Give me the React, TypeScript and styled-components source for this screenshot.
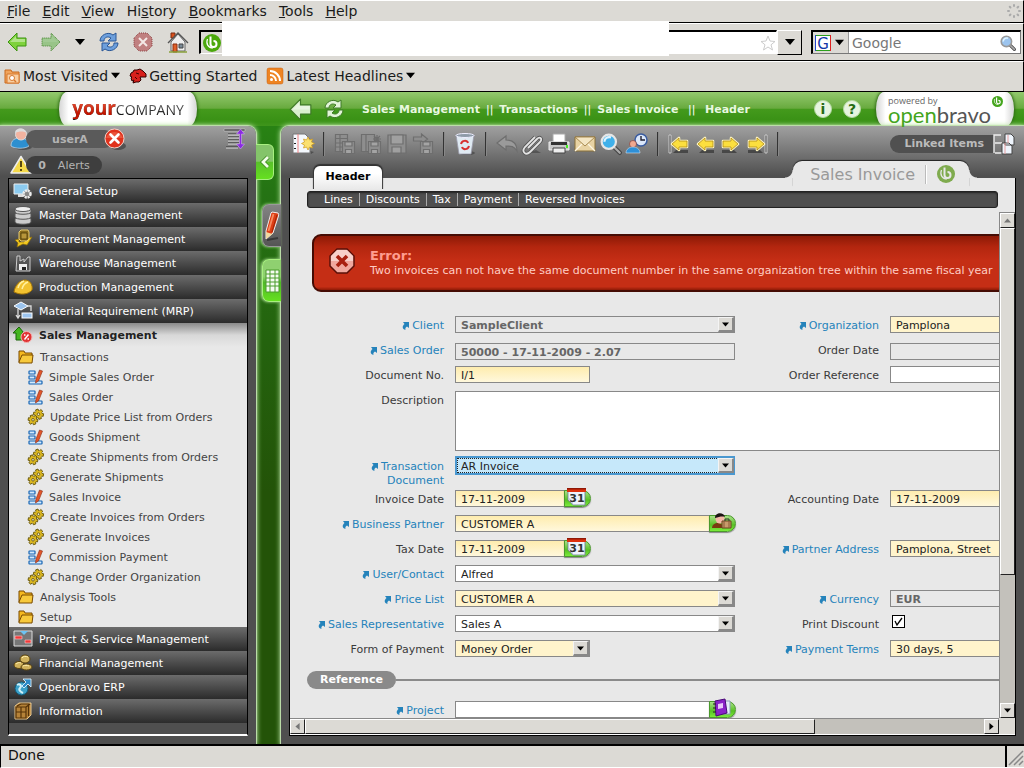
import React from 'react';
import styled, { createGlobalStyle, css } from 'styled-components';

const Global = createGlobalStyle`
  * { box-sizing: border-box; }
  html, body, #root { height: 100%; margin: 0; }
  body { font-family: "DejaVu Sans", Verdana, sans-serif; font-size: 11px; color: #3a3a3a; overflow: hidden; }
  button { border: 0; padding: 0; background: none; font: inherit; color: inherit; }
  a { color: inherit; text-decoration: none; }
  svg { display: block; flex: none; overflow: visible; }
`;

const chrome = '#dcdad5';
const panel = '#e8e8e8';

/* ---------- browser window ---------- */
const Window = styled.div`
  display: flex; flex-direction: column; height: 100vh; background: ${chrome};
`;
const ChromeBar = styled.div<{ $h: number }>`
  display: flex; align-items: center; flex: none; position: relative;
  height: ${p => p.$h}px; background: ${chrome};
  border-top: 1px solid #fff; border-bottom: 1px solid #000; border-right: 1px solid #000;
  font-size: 14px; color: #1a1a1a;
`;
const MenuBar = styled(ChromeBar)`padding: 0 2px 2px 7px; gap: 12px;`;
const Spacer = styled.span`flex: 1;`;
const NavBar = styled(ChromeBar)`padding: 0 2px 0 7px;`;
const NavButtons = styled.div`display: flex; align-items: center; gap: 14px; width: 192px; flex: none;`;
const NavButton = styled.button`display: flex;`;
const UrlBox = styled.div`
  position: relative; display: flex; align-items: center; flex: 1; height: 24px; background: #fff;
  border: 2px solid #000; border-right: 1px solid #fff; border-bottom: 1px solid #fff;
`;
const SiteBadge = styled.span`
  display: flex; align-items: center; height: 100%; width: 23px; padding-left: 2px; background: ${chrome};
`;
const UrlInput = styled.input`
  position: absolute; left: 21px; right: 107px; top: -11px; height: 35px; border: 0; background: #fff; padding: 0 8px;
`;
const DropButton = styled.button`
  display: flex; align-items: center; justify-content: center; width: 25px; height: 25px; margin-right: 9px;
  background: ${chrome}; border: 1px solid #fff; border-right: 1px solid #000; border-bottom: 1px solid #000;
`;
const SearchBox = styled.div`
  display: flex; align-items: center; width: 210px; height: 24px; background: #fff; flex: none;
  border: 1px solid #777; border-top: 2px solid #000; border-left: 2px solid #000; padding-right: 4px;
`;
const Engine = styled.button`
  display: flex; align-items: center; gap: 4px; width: 36px; height: 100%; padding-left: 2px;
  background: ${chrome}; border-right: 1px solid #999; flex: none;
`;
const SearchInput = styled.input`
  flex: 1; min-width: 0; border: 0; padding: 0 3px; font: 14px "DejaVu Sans", sans-serif; background: none;
  &::placeholder { color: #777; opacity: 1; }
`;
const BookmarkBar = styled(ChromeBar)`padding: 0 4px 2px; gap: 10px;`;
const Bookmark = styled.a`display: flex; align-items: center; gap: 3px;`;
const StatusBar = styled.footer`
  display: flex; align-items: center; height: 24px; flex: none; padding: 0 0 0 7px; font-size: 14px; color: #111;
  background: ${chrome}; border-top: 2px solid #000; border-left: 1px solid #000; border-bottom: 1px solid #fff;
`;
const StatusText = styled.span`padding-bottom: 3px;`;
const Grip = styled.span`
  display: flex; align-items: flex-end; width: 19px; height: 100%; border-left: 2px solid #000; padding: 2px;
`;

/* ---------- application frame ---------- */
const AppArea = styled.div`
  display: flex; flex-direction: column; flex: 1; min-height: 0; overflow: hidden;
  background: linear-gradient(#2a8a14, #257314 100px, #235308 400px);
`;
const Header = styled.header`
  display: flex; align-items: center; height: 34px; flex: none; padding-right: 10px;
  background: linear-gradient(#93c96e, #68aa3e 48%, #449a1c 50%, #389015 88%, #3f951c);
`;
const LogoPlate = styled.div<{ $at: number }>`
  display: flex; align-items: center; justify-content: center; width: 138px; height: 34px; flex: none;
  margin-left: ${p => p.$at}px; border-radius: 8px / 17px;
  background: linear-gradient(90deg, #d5d5d5, #fff 7%, #fff 93%, #d5d5d5);
  box-shadow: 0 0 3px 1px #2f6a17;
`;
const CompanyName = styled.div`
  font-family: "Open Sans", sans-serif; font-size: 14px; line-height: 22px; display: flex; align-items: baseline;
  color: transparent; background: linear-gradient(#999, #111 75%); background-clip: text;
  b { font-size: 19px; background: linear-gradient(#ef6a4d, #c31500 75%); background-clip: text; }
`;
const HeaderTools = styled.div`display: flex; align-items: center; gap: 12px; margin-left: 92px; flex: none;`;
const IconButton = styled.button`display: flex; flex: none;`;
const Crumbs = styled.nav`
  display: flex; align-items: center; gap: 6px; margin-left: 18px; flex: 1; color: #fff; white-space: nowrap;
  a { font-weight: bold; color: #e9f8e0; }
`;
const Powered = styled.div`
  position: relative; font-family: "Open Sans", sans-serif; font-size: 9px; line-height: 11px; color: #666;
  width: 118px; padding-left: 2px;
`;
const Brand = styled.div`
  font-family: Lato, sans-serif; font-size: 22px; line-height: 18px; color: #555;
  span { color: #44a51c; }
`;
const BrandMark = styled.span`position: absolute; right: 1px; top: 1px;`;
const Body = styled.div`display: flex; flex: 1; min-height: 0;`;
const glow = css`
  background: linear-gradient(#a0a0a0, #4f4f4f 50px);
  box-shadow: 0 0 5px 1px #bfe8a8, 0 0 1px 1px #c4d8b8;
`;
const Sidebar = styled.aside`
  display: flex; flex-direction: column; width: 256px; flex: none; border-radius: 0 8px 0 0; ${glow}
`;
const Rail = styled.div`display: flex; flex-direction: column; width: 25px; flex: none; padding-top: 18px; z-index: 1;`;
const Collapse = styled.button`
  display: flex; align-items: center; justify-content: center; width: 18px; height: 36px; margin-bottom: 24px;
  border: 1px solid #a8f080; border-left: 0; border-radius: 0 6px 6px 0; background: linear-gradient(#84c46a 48%, #58c02a 50%, #66e020);
`;
const RailTab = styled.button<{ $gray?: boolean }>`
  display: flex; align-items: center; justify-content: center; align-self: flex-end; width: 19px; height: 43px;
  margin-bottom: 12px; border-radius: 7px 0 0 7px;
  border: 1px solid ${p => (p.$gray ? '#999' : '#a8f080')}; border-right: 0;
  background: ${p => (p.$gray ? 'linear-gradient(#848484, #555)' : 'linear-gradient(#8fd070 40%, #50b828 55%, #66e020)')};
  box-shadow: -1px 0 3px #b5e59c;
`;

/* ---------- side menu ---------- */
const UserRow = styled.div`display: flex; align-items: center; height: 26px; padding: 0 10px; flex: none;`;
const Pill = styled.span<{ $w: number; $bg: string }>`
  display: flex; align-items: center; justify-content: center; gap: 12px; width: ${p => p.$w}px; height: 18px;
  margin: 0 -10px 0 -6px; border-radius: 9px; background: ${p => p.$bg}; color: #b3b3b3;
`;
const Menu = styled.nav`
  flex: 1; margin: 0 8px 8px; border: 1px solid #000; border-bottom: 2px solid #fff; overflow: hidden;
`;
const Module = styled.a<{ $open?: boolean }>`
  display: flex; align-items: center; gap: 6px; height: 24px; padding-left: 4px; white-space: nowrap;
  ${p => p.$open
    ? css`background: linear-gradient(#8a8a8a, #d8d8d8 50%, ${panel}); color: #222; font-weight: bold;`
    : css`background: linear-gradient(#6c6c6c, #2b2b2b); color: #fff;`}
`;
const Leaf = styled.a<{ $deep?: boolean }>`
  display: flex; align-items: center; gap: 6px; height: 20px; padding-left: ${p => (p.$deep ? 19 : 9)}px;
  background: ${panel}; color: #444; white-space: nowrap;
`;

/* ---------- main panel ---------- */
const Main = styled.main`
  display: flex; flex-direction: column; flex: 1; min-width: 0; border-radius: 8px 0 0 0; ${glow}
`;
const ToolBar = styled.div`display: flex; align-items: center; height: 35px; flex: none; padding: 0 9px 0 11px;`;
const Tools = styled.div<{ $gap: number }>`display: flex; align-items: center; gap: ${p => p.$gap}px;`;
const Rule = styled.span`
  width: 2px; height: 24px; margin: 0 9px; background: #333; border-right: 1px solid #888; flex: none;
`;
const Linked = styled.button`display: flex; align-items: center; color: #bbb; font-weight: bold;`;
const LinkedPill = styled.span`
  display: flex; align-items: center; height: 18px; padding: 0 10px 0 14px; border-radius: 9px 0 0 9px; background: #505050;
`;
const TabsRow = styled.div`
  display: flex; align-items: flex-start; justify-content: space-between; height: 17px; flex: none; padding: 0 55px 0 33px;
`;
const ActiveTab = styled.button`
  position: relative; z-index: 1; width: 68px; height: 24px; margin-top: 5px; padding-bottom: 4px; color: #000; font-weight: bold;
  background: linear-gradient(#fff 30%, ${panel}); border-radius: 6px 6px 0 0; box-shadow: 0 -1px 1px 1px #333;
  clip-path: inset(-3px -3px 1px -3px);
`;
const TitleTab = styled.h1`
  position: relative; display: flex; align-items: center; gap: 10px; margin: 0; height: 26px; padding: 0 14px 0 17px;
  font-size: 16px; font-weight: normal; color: #999; background: ${panel}; border-radius: 9px 9px 0 0;
  box-shadow: 0 -1px 1px #222;
  &::before, &::after { content: ""; position: absolute; top: 9px; width: 8px; height: 8px; }
  &::before { left: -8px; background: radial-gradient(circle at 0 0, transparent 7px, ${panel} 8px); }
  &::after { right: -8px; background: radial-gradient(circle at 100% 0, transparent 7px, ${panel} 8px); }
  i { width: 2px; height: 19px; background: #bbb; border-right: 1px solid #fff; }
`;
const Panel = styled.section`
  display: flex; flex-direction: column; flex: 1; min-height: 0; margin: 0 8px 8px;
  background: ${panel}; border: solid #000; border-width: 0 1px 1px;
`;
const SubTabs = styled.nav`
  display: flex; align-items: center; height: 17px; flex: none; margin: 13px 17px 4px; padding-left: 10px;
  border: 1px solid #222; border-radius: 3px; background: #4f4f4f; box-shadow: inset 0 1px 2px #222; color: #fff; z-index: 1;
  a { padding: 0 6px; line-height: 13px; }
  a + a { border-left: 1px solid #aaa; }
`;
const ScrollFrame = styled.div`
  display: grid; grid-template: minmax(0, 1fr) 16px / minmax(0, 1fr) 16px; flex: 1; min-height: 0;
  border-bottom: 1px solid #fff;
`;
const View = styled.div`overflow: hidden;`;
const Document = styled.div`min-width: 944px; padding: 22px 0 0 22px;`;
const Track = styled.div<{ $v?: boolean }>`
  display: flex; flex-direction: ${p => (p.$v ? 'column' : 'row')}; background: #c3c1bb; min-width: 0; min-height: 0;
  border: solid #888; border-width: ${p => (p.$v ? '1px 0 0 1px' : '1px 0 0 0')};
`;
const raised = css`
  background: ${chrome}; border: 1px solid #fff; border-right-color: #222; border-bottom-color: #222;
`;
const TrackButton = styled.button`
  display: flex; align-items: center; justify-content: center; width: 15px; height: 15px; flex: none; ${raised}
`;
const Thumb = styled.div<{ $share: number }>`flex: ${p => p.$share} 0 0; ${raised}`;
const Rest = styled.div<{ $share: number }>`flex: ${p => p.$share} 0 0;`;
const Corner = styled.div`background: ${chrome};`;

/* ---------- message and form ---------- */
const ErrorBox = styled.div`
  display: flex; gap: 15px; height: 58px; padding: 12px 0 0 15px; border: 2px solid #450c04; border-radius: 9px;
  background: linear-gradient(#8d1a06, #b3260f 20%, #c52e15 45%, #c52e15 94%, #8d1a06);
  color: #ffcdc4; white-space: nowrap; overflow: hidden;
  h2 { margin: 0; font-size: 13px; line-height: 15px; color: #ff9d90; }
  p { margin: 0; line-height: 16px; }
`;
const Form = styled.form`
  display: grid; grid-template-columns: 132px 280px 133px 280px; column-gap: 11px; padding-top: 20px;
  grid-auto-rows: 25px; align-items: center;
  grid-template-rows: 25px 25px 25px 66px 33px;
`;
const LabelCell = styled.label<{ $col?: number; $link?: boolean; $top?: number }>`
  grid-column: ${p => p.$col ?? 1}; display: flex; justify-content: flex-end; gap: 3px; text-align: right;
  line-height: 14px; color: ${p => (p.$link ? '#2583bb' : '#3a3a3a')}; white-space: nowrap; padding-top: ${p => p.$top ?? 2}px;
  ${p => p.$top !== undefined && css`align-self: start;`}
  svg { margin-top: 3px; }
`;
type Tone = 'yellow' | 'gray' | 'white';
const fills: Record<Tone, string> = { yellow: '#fff4cc', gray: panel, white: '#fff' };
const control = css`
  height: 17px; border: 1px solid #888; border-radius: 0; padding: 1px 0 0 5px; margin: 0; outline: 0;
  font: 11px "DejaVu Sans", Verdana, sans-serif; color: #222;
`;
const FieldCell = styled.div<{ $col?: number; $w?: number; $low?: boolean; $top?: boolean }>`
  position: relative; grid-column: ${p => p.$col ?? 2}; display: flex; align-items: center;
  ${p => p.$w && css`width: ${p.$w}px;`}
  ${p => p.$low && css`margin-top: 4px;`}
  ${p => p.$top && css`align-self: start; padding-top: 3px;`}
`;
const TextInput = styled.input<{ $tone: Tone }>`
  ${control} flex: 1; min-width: 0;
  background: ${p => (p.$tone === 'yellow' ? 'linear-gradient(#feecae, #fff8dc)' : fills[p.$tone])};
  ${p => p.$tone === 'gray' && css`font-weight: bold; color: #666;`}
`;
const SelectInput = styled.select<{ $tone: Tone; $focus?: boolean }>`
  ${control} appearance: none; width: 100%; background: ${p => fills[p.$tone]};
  ${p => p.$tone === 'gray' && css`font-weight: bold; color: #666;`}
  ${p => p.$focus && css`height: 19px; padding-left: 4px; border: 2px solid #4a98d0; background: #c6e8fa; outline: 1px dotted #222; outline-offset: -3px;`}
`;
const SelectKnob = styled.span`
  position: absolute; right: 1px; width: 16px; height: 15px; display: flex; align-items: center; justify-content: center;
  background: ${chrome}; border: 1px solid #f4f4f4; border-right: 2px solid #888; border-bottom: 2px solid #888; pointer-events: none;
`;
const TextArea = styled.textarea`
  grid-column: 2 / 5; align-self: start; margin: 4px 0 0; height: 60px; border: 1px solid #888; resize: none; background: #fff;
`;
const Picker = styled.button`
  position: relative; display: flex; align-items: center; justify-content: center; width: 27px; height: 17px; margin: 0 -1px;
  border: 1px solid #4b9a2c; border-radius: 0 9px 9px 0; background: linear-gradient(#a8e088, #58c024 60%, #7cec3c);
  box-shadow: 0 1px 1px #888;
  svg { margin: -4px 3px 0 0; }
`;
const Check = styled.input`appearance: none; width: 13px; height: 13px; margin: 0 0 4px 2px; border: 1px solid #000; background: #fff;`;
const CheckMark = styled.span`position: absolute; left: 4px; top: 2px; pointer-events: none;`;
const Group = styled.div`
  grid-column: 1 / 5; display: flex; align-items: center; height: 38px; margin-left: -5px; align-self: start;
  span { height: 18px; padding: 0 13px; border-radius: 9px; background: #8a8a8a; color: #fff; font-weight: bold; line-height: 18px; }
  hr { flex: 1; height: 2px; margin: 0; border: 0; background: #8a8a8a; }
`;
const ProjectRow = styled(Form)`padding-top: 11px; grid-template-rows: 25px;`;

/* ---------- drawings ---------- */
const Tri = ({ d = 'down', s = 10, c = '#000' }: { d?: string; s?: number; c?: string }) => {
  const paths: Record<string, string> = { down: 'M0 2h10L5 8z', up: 'M0 8h10L5 2z', left: 'M8 0v10L2 5z', right: 'M2 0v10L8 5z' };
  return <svg width={s} height={s} viewBox="0 0 10 10"><path d={paths[d]} fill={c} /></svg>;
};
const Arrow = ({ w = 20, fill, stroke, flip, dashed }: { w?: number; fill: string; stroke: string; flip?: boolean; dashed?: boolean }) => (
  <svg width={w} height={w} viewBox="0 0 20 20"><g transform={flip ? 'matrix(-1 0 0 1 20 0)' : undefined}>
    <path d="M1 10l9-9v5h9v8h-9v5z" fill={fill} stroke={stroke} strokeLinejoin="round" strokeDasharray={dashed ? '1 1' : undefined} />
    <path d="M3 10l6-6v3h9v3z" fill="#fff" opacity={dashed ? 0.1 : 0.4} /></g></svg>
);
const Refresh = ({ c, e }: { c: string; e: string }) => (
  <svg width="20" height="20" viewBox="0 0 20 20" fill={c} stroke={e} strokeWidth="1">
    <path d="M1 9C1 3 9-1 14 3l3-2v8H9l3-3C9 4 5 5 5 9z" /><path d="M19 11c0 6-8 10-13 6l-3 2v-8h8l-3 3c3 2 7 1 7-3z" />
  </svg>
);
const Mark = ({ s, c, inner = '#fff' }: { s: number; c: string; inner?: string }) => (
  <svg width={s} height={s} viewBox="0 0 18 18"><circle cx="9" cy="9" r="9" fill={c} />
    <path d="M7.500 2.500v7.500a3 3 0 1 0 3-3" fill="none" stroke={inner} strokeWidth="2" /><path d="M4.500 5c-2 5 1 9 5.500 9" fill="none" stroke={inner} strokeWidth="1.200" /></svg>
);
const Home = () => (
  <svg width="22" height="22" viewBox="0 0 22 22"><path d="M4 2h4v5H4z" fill="#d8501c" stroke="#7a2a10" /><path d="M4 11l7-8 7 8v9H4z" fill="#eee" stroke="#666" />
    <path d="M1 12L11 2l10 10" fill="none" stroke="#555" strokeWidth="1.400" /><path d="M6 13h4v8H6z" fill="#e0602a" stroke="#8a2c10" /><path d="M12 13h4v4h-4z" fill="#7a8b98" stroke="#444" /><path d="M2 21h18" stroke="#8aa03a" strokeWidth="1.500" /></svg>
);
const StopIcon = () => (
  <svg width="20" height="20" viewBox="0 0 20 20"><path d="M6 1h8l5 5v8l-5 5H6l-5-5V6z" fill="#c08080" stroke="#8c4040" strokeDasharray="1 1" /><path d="M6 6l8 8M14 6l-8 8" stroke="#f4e8e6" strokeWidth="2" /></svg>
);
const Star = () => (
  <svg width="16" height="16" viewBox="0 0 16 16"><path d="M8 1l2 5 5 .5-4 3.300L12.500 15 8 12l-4.500 3L5 9.800 1 6.500 6 6z" fill="#fff" stroke="#ccc" /></svg>
);
const Lens = ({ s = 16, soft }: { s?: number; soft?: boolean }) => (
  <svg width={s} height={s} viewBox="0 0 20 20"><path d="M12 12l6 6" stroke="#444" strokeWidth="4" strokeLinecap="round" /><path d="M12 12l6 6" stroke="#aaa" strokeWidth="2" strokeLinecap="round" />
    <circle cx="8" cy="8" r="6.500" fill={soft ? '#9cc4ee' : '#3fb0ea'} stroke={soft ? '#999' : '#e6e6e6'} strokeWidth="2" /><path d="M4 8c0-3 3-5 6-4" stroke="#dff4ff" strokeWidth="2" fill="none" /></svg>
);
const Throbber = () => (
  <svg width="14" height="14" viewBox="0 0 14 14" fill="#aaa">{[0, 45, 90, 135, 180, 225, 270, 315].map(a => <rect key={a} x="6" y="0" width="2" height="3" rx="1" transform={`rotate(${a} 7 7)`} />)}</svg>
);
const Rss = () => (
  <svg width="16" height="16" viewBox="0 0 16 16"><rect width="16" height="16" rx="2" fill="#ee8422" stroke="#c65f10" strokeWidth=".5" /><g fill="none" stroke="#fff" strokeWidth="2"><path d="M3 7a6 6 0 0 1 6 6M3 3a10 10 0 0 1 10 10" /></g><circle cx="4.500" cy="11.500" r="1.500" fill="#fff" /></svg>
);
const MostVisited = () => (
  <svg width="16" height="16" viewBox="0 0 16 16"><path d="M1 2h6l1 2h7v11H1z" fill="#f0a45c" stroke="#c8681c" /><path d="M3 6h12v9H3z" fill="#f8cfa2" stroke="#d8782c" /><circle cx="8" cy="10" r="2.500" fill="#fff" stroke="#d8782c" /><path d="M10 12l2 2" stroke="#d8782c" strokeWidth="1.500" /></svg>
);
const Dino = () => (
  <svg width="16" height="14" viewBox="0 0 16 14"><path d="M1 4l2-1 1-2 3 0 3-1 3 2 3 3v3l-4 0-2 0 1 3-2 2-3 0-3 1 1-3-2 1-1-3 1-1-2-1z" fill="#d8201c" stroke="#300" strokeWidth="1" /><path d="M6 4l3 1M5 8l2 2" stroke="#400" /></svg>
);
const UserIcon = ({ s = 22 }: { s?: number }) => (
  <svg width={s} height={s} viewBox="0 0 22 22"><ellipse cx="13" cy="19" rx="9" ry="3" fill="#333" opacity=".6" /><path d="M1 18c0-6 4-8 9-8s9 2 9 8c-4 3-14 3-18 0z" fill="#2d8fd0" stroke="#cde" strokeWidth=".7" /><circle cx="11" cy="6.500" r="5.500" fill="#f2b3a0" stroke="#ddd" /><path d="M5 5c0-6 10-6 12 0-3-2-8-2-12 0z" fill="#ddd" /></svg>
);
const CloseIcon = () => (
  <svg width="22" height="22" viewBox="0 0 22 22"><ellipse cx="14" cy="18" rx="8" ry="4" fill="#333" opacity=".6" /><circle cx="10.500" cy="10.500" r="9.500" fill="#e0321c" stroke="#f4d0c8" /><path d="M2 10a9 9 0 0 1 17 0z" fill="#f06a50" opacity=".6" /><path d="M6.500 6.500l8 8M14.500 6.500l-8 8" stroke="#fff" strokeWidth="2.600" strokeLinecap="round" /></svg>
);
const Warn = () => (
  <svg width="22" height="20" viewBox="0 0 22 20"><path d="M11 1.500L21 18H1z" fill="#f5d94a" stroke="#eee" strokeWidth="1.500" strokeLinejoin="round" /><path d="M11 6v6M11 14v2" stroke="#5a4a10" strokeWidth="2" /></svg>
);
const MenuToggle = () => (
  <svg width="22" height="22" viewBox="0 0 22 22"><path d="M0 1h21v2H0z" fill="#444" stroke="#ccc" strokeWidth=".6" /><g stroke="#333" strokeWidth="1"><path d="M4 6h11M4 9h11M4 12h11M4 15h11M2 19h12" /></g><g stroke="#ddd" strokeWidth="1"><path d="M4 7h11M4 10h11M4 13h11M4 16h11M2 20h12" /></g><path d="M16.500 1l4 5h-3v10h3l-4 5-4-5h3V6h-3z" fill="#8a2be2" stroke="#d9b8f4" strokeWidth=".5" /></svg>
);
const Folder = () => (
  <svg width="16" height="14" viewBox="0 0 16 14"><path d="M1 12V1h5l1 2h7v3" fill="#f5b81e" stroke="#7a4a00" /><path d="M1 12l3-7h11l-1 8H1z" fill="#f7c93c" stroke="#7a4a00" /></svg>
);
const WindowDoc = () => (
  <svg width="15" height="15" viewBox="0 0 15 15"><g fill="#d4eafc" stroke="#1464b4" strokeWidth="1.200"><rect x="1" y="1" width="6" height="3" rx=".5" /><rect x="1" y="6" width="6" height="3" rx=".5" /><rect x="1" y="11" width="13" height="3" rx=".5" /></g><path d="M11.500 0l3 1-4 10-3 2 .5-4z" fill="#e0562a" stroke="#8e2c10" strokeWidth=".6" /></svg>
);
const Gear = ({ x, y, r }: { x: number; y: number; r: number }) => (
  <g transform={`translate(${x} ${y})`}>
    {[0, 60, 120].map(a => <path key={a} d={`M-${r} -1.300h${2 * r}v2.600h-${2 * r}z`} transform={`rotate(${a + 10})`} fill="#dcb822" stroke="#6a5a10" strokeWidth=".9" />)}
    <circle r={r - 1.600} fill="#dcb822" /><circle r="1.300" fill="#efe9d0" stroke="#6a5a10" strokeWidth=".9" />
  </g>
);
const Gears = () => <svg width="16" height="16" viewBox="0 0 16 16"><Gear x={10.500} y={5.200} r={5} /><Gear x={5} y={10.800} r={4.800} /></svg>;
const moduleArt: Record<string, React.ReactNode> = {
  setup: <><path d="M1 3h14v10H1z" fill="#8ccbf0" stroke="#eee" /><path d="M5 13h5v3H5z" fill="#ddd" /><circle cx="14" cy="13" r="3.500" fill="#888" stroke="#eee" strokeWidth="2.500" strokeDasharray="2 .8" /></>,
  data: <g fill="#ccc" stroke="#555">{[14, 9, 4].map(y => <path key={y} d={`M2 ${y}c0-3 16-3 16 0v3c0 3-16 3-16 0z`} />)}<ellipse cx="10" cy="4" rx="8" ry="2.500" fill="#eee" /></g>,
  procure: <><path d="M2 11l4-1v3h5l4-4 4-1-5 8-4-1-6 3 1-4z" fill="#f2c81e" stroke="#8a6a08" strokeWidth=".7" /><path d="M6 3l2-2h7l1 2v7l-2 2H8l-2-2z" fill="#8a6c1c" stroke="#e8cc70" /><path d="M8 4h6v6H8z" fill="#b8963a" stroke="#4a3808" strokeWidth=".8" /></>,
  warehouse: <><path d="M4 3h3v5l4-2v3l4-5h2v14H3z" fill="#555" stroke="#ccc" /><path d="M6 11h8v6H6z" fill="#eee" /><path d="M9 14h4v3H9z" fill="#222" /></>,
  production: <><path d="M1 15C2 8 7 3 12 3c5 0 8 5 7 10-4 5-12 5-18 2z" fill="#f2c230" stroke="#a87808" /><path d="M5 11c1-4 3-6 6-7M9 12c1-4 3-6 6-7" stroke="#fff0a0" strokeWidth="1.500" fill="none" /></>,
  mrp: <><path d="M8 1l7 4-7 4-7-4z" fill="#9cc4ee" stroke="#fff" /><path d="M5 8v9M3 14l2 3 2-3M15 5h3v5" fill="none" stroke="#ddd" strokeWidth="1.300" /><rect x="9" y="12" width="10" height="5" fill="#9cc4ee" stroke="#fff" /></>,
  sales: <><path d="M6 2l5 6H9v7H3V8H0z" fill="#43b51e" stroke="#1a6408" /><circle cx="13.500" cy="12" r="5.500" fill="#e03434" stroke="#f4b4b4" /><path d="M11.500 14.500l4-5M11 10h1.500M14.500 14H16" stroke="#fff" strokeWidth="1.500" /></>,
  project: <><path d="M1 2h18v15H1z" fill="#777" stroke="#ddd" /><path d="M2 7h7v3H2zM12 11h6v3h-6z" fill="#f03a3a" stroke="#fcc" strokeWidth=".6" /><path d="M7 2h8l-4 4z" fill="#6cc4f4" /></>,
  finance: <g fill="#d0b25c" stroke="#5a4410"><ellipse cx="12" cy="6" rx="5" ry="4" /><ellipse cx="6" cy="12" rx="5" ry="3.500" /><ellipse cx="13.500" cy="14" rx="5.500" ry="3" /><path d="M9 5c1-2 4-2 6-1M3 11c1-1 3-2 5-1M10 13c2-1 4-1 6 0" stroke="#fff0b0" fill="none" /></g>,
  erp: <><circle cx="8.500" cy="11.500" r="6.500" fill="#3aa0c8" stroke="#145a78" /><path d="M4 8c3-2 5 1 3 3s1 4 3 5" fill="none" stroke="#d0f0f8" strokeWidth="2" /><path d="M10 2h8v8l-3-3-4 4-2-2 4-4z" fill="#2d8ac8" stroke="#dff2fc" strokeWidth=".9" /></>,
  info: <><path d="M2 5l4-3h12v12l-4 4H2z" fill="#b58238" stroke="#e8c890" /><path d="M3 6h10v11H3zM8 6v11M3 11h10M13 6l4-3M15.500 4v11M4 5l4-2h8" fill="none" stroke="#553208" strokeWidth="1.200" /></>,
};
const Art = ({ id }: { id: string }) => <svg width="20" height="20" viewBox="0 0 20 20">{moduleArt[id]}</svg>;

const faded = { fill: '#8e8e8e', stroke: '#6e6e6e', strokeWidth: 1.2 };
const Disk = () => <><path d="M8.500 8.500h12v12h-12z" /><path d="M11 9h7v4h-7z" fill="#a4a4a4" /><path d="M11.500 16.500h6v4h-6z" fill="#a4a4a4" /></>;
const toolArt: Record<string, React.ReactNode> = {
  fresh: <><path d="M19 21l3-2-4-1z" fill="#333" opacity=".6" /><path d="M1 1h12l5 5v14H1z" fill="#f4f8fd" stroke="#777" /><path d="M6 1v19" stroke="#f08080" /><path d="M3 5v1M3 10v1M3 15v1" stroke="#222" strokeWidth="2" /><path d="M16 4l1.500 3 3-1-1 3 3 1.500-3 1.500 1 3-3-1L16 17l-1.500-3-3 1 1-3-3-1.500 3-1.500-1-3 3 1z" fill="#fbe070" stroke="#d09a1a" strokeWidth=".7" /></>,
  saveGrid: <g {...faded}><path d="M1.500 1.500h12v17h-12zM1.500 5.500h12M1.500 10h12M1.500 14h12M6 1.500v17" /><Disk /></g>,
  saveNew: <g {...faded}><path d="M1.500 1.500h13v17h-13zM6 1.500v17" /><path d="M17 2v8M13 6h8M14 3l6 6M20 3l-6 6" /><Disk /></g>,
  save: <g {...faded}><path d="M2 2h18v18H2z" /><path d="M5 2h12v9H5z" fill="#a0a0a0" /><path d="M6 14h9v6H6z" fill="#a0a0a0" /></g>,
  saveNext: <g {...faded}><path d="M1.500 4h8V1l6 5-6 5V8h-8z" /><Disk /></g>,
  trash: <><ellipse cx="13" cy="20" rx="8" ry="2" fill="#333" opacity=".5" /><path d="M2 2h18l-3 19H5z" fill="#dfeaf2" stroke="#99a" strokeWidth=".8" /><ellipse cx="11" cy="2.500" rx="9" ry="2" fill="#8e9ba8" stroke="#eef" /><path d="M7 11c1-4 6-4 7-1M15 13c-1 4-6 4-7 1" fill="none" stroke="#d83030" strokeWidth="2" /></>,
  undo: <path d="M1 10l9-7v4c7 0 11 4 11 11-3-5-6-5-11-5v4z" {...faded} fill="#9a9a9a" />,
  clip: <><path d="M6 20h13l-5-3z" fill="#333" opacity=".5" /><path d="M7 15l9-9c3-3 6 0 3 3L9 19c-4 4-9 0-5-5L14 4" transform="translate(-1 0)" fill="none" stroke="#555" strokeWidth="3.400" /><path d="M7 15l9-9c3-3 6 0 3 3L9 19c-4 4-9 0-5-5L14 4" transform="translate(-1 0)" fill="none" stroke="#e4e4e4" strokeWidth="1.800" /></>,
  print: <><path d="M5 1h12v8H5z" fill="#fff" stroke="#aaa" /><path d="M1 9h20v8H1z" fill="#c8c8c8" stroke="#eee" /><path d="M3 9h16v3H3z" fill="#333" /><path d="M5 15h12v5H5z" fill="#eee" stroke="#444" /><path d="M19 12v3" stroke="#4e2" strokeWidth="2" /></>,
  mail: <><path d="M1 4h20v14H1z" fill="#e8d3a4" stroke="#8a7038" /><path d="M1 18l7-7M21 18l-7-7" fill="none" stroke="#fff8e4" strokeWidth="1.200" /><path d="M1 4l10 9 10-9z" fill="#f4e6c4" stroke="#a08248" strokeWidth=".9" /></>,
};
const ToolArt = ({ id }: { id: string }) => <svg width="22" height="22" viewBox="0 0 22 22">{toolArt[id]}</svg>;
const UserClock = () => (
  <svg width="22" height="22" viewBox="0 0 22 22"><circle cx="15" cy="7" r="6" fill="#dbe7fa" stroke="#3a5ca0" strokeWidth="1.500" /><path d="M15 3v4h4" fill="none" stroke="#223" strokeWidth="1.400" /><circle cx="7" cy="11" r="3.500" fill="#f0a890" stroke="#733" strokeWidth=".6" /><path d="M0 20c0-8 14-8 14 0z" fill="#2e90d8" stroke="#cde" strokeWidth=".6" /></svg>
);
const Step = ({ flip, bar }: { flip?: boolean; bar?: boolean }) => (
  <svg width="22" height="20" viewBox="0 0 22 20"><g transform={flip ? 'matrix(-1 0 0 1 22 0)' : undefined}><path d="M5 19h15v-3H8z" fill="#333" opacity=".7" />{bar && <path d="M1 1h2v18H1z" fill="#555" stroke="#ddd" strokeWidth=".8" />}<path d="M4 10l7-6v3h8v6h-8v3z" fill="#fcdf3e" stroke="#fff6c0" strokeWidth="2.600" strokeLinejoin="round" /><path d="M4 10l7-6v3h8v6h-8v3z" fill="#fcdf3e" stroke="#b08a18" strokeWidth=".8" /></g></svg>
);
const LinkedIcon = () => (
  <svg width="21" height="22" viewBox="0 0 21 22"><path d="M0 20V2h7M1 10h7M1 20h8" fill="none" stroke="#eee" strokeWidth="1.400" /><path d="M11 1h6l3 3v8h-9zM8 10h7l3 3v8H8z" fill="#eef4fc" stroke="#444" /><path d="M11 10v11M14 2v8" stroke="#e8a0a0" /></svg>
);
const HelpDot = ({ t }: { t: string }) => (
  <svg width="18" height="18" viewBox="0 0 18 18"><circle cx="9" cy="9" r="8.500" fill="#e6f4e0" stroke="#b5d8a2" /><text x="9" y="14" textAnchor="middle" fontSize="14" fontWeight="bold" fontFamily="DejaVu Sans" fill="#246b12">{t}</text></svg>
);
const Pencil = () => (
  <svg width="16" height="32" viewBox="0 0 16 32"><path d="M3 30l11-2" stroke="#222" strokeWidth="2" opacity=".6" /><path d="M8 2l6 1q1 1 .5 3L9 23l-7 6 0-8L7 3z" fill="#dc3d14" stroke="#eee" /><path d="M2 22l6.500 2L2 29z" fill="#f0d8a0" /><path d="M9.500 4L4.500 21" stroke="#f88a60" strokeWidth="1.800" /><path d="M13 5L8 22" stroke="#a02408" strokeWidth="1" /></svg>
);
const GridIcon = () => (
  <svg width="13" height="22" viewBox="0 0 13 22"><path d="M0 0h13v22H0z" fill="#f4fbf0" stroke="#4a9c2c" /><path d="M0 4h13M0 8h13M0 12h13M0 16h13M4 0v22M9 0v22" stroke="#4a9c2c" strokeWidth="1" /></svg>
);
const Chevron = () => <svg width="12" height="14" viewBox="0 0 12 14"><path d="M9 2L4 7l5 5" fill="none" stroke="#3f8a22" strokeWidth="4.400" /><path d="M9 2L4 7l5 5" fill="none" stroke="#f2ffea" strokeWidth="2.800" /></svg>;
const ErrorSign = () => (
  <svg width="26" height="26" viewBox="0 0 26 26"><path d="M8 1h10l7 7v10l-7 7H8l-7-7V8z" fill="#f0a89e" stroke="#5a1008" strokeWidth="1.500" /><path d="M8 2h10l6 6v5H2V8z" fill="#f8d0ca" /><path d="M8 8l10 10M18 8L8 18" stroke="#a82010" strokeWidth="3.600" /></svg>
);
const LinkArrow = () => <svg width="7" height="8" viewBox="0 0 7 8"><path d="M1 0h6v6L5 4.500C3.500 5.500 3 6.500 3.500 8 0 7 0 4 2.500 2z" fill="#2583bb" /></svg>;
const Calendar = () => (
  <svg width="19" height="18" viewBox="0 0 19 18"><path d="M1 2h17v15H6l-5-5z" fill="#eef3fb" stroke="#6a7a98" strokeWidth=".8" /><path d="M1 10c3 0 5 3 5 7z" fill="#b8c4d8" /><path d="M0 0h19v4H0z" fill="#e0300c" /><path d="M0 0h19v1.500H0z" fill="#901806" /><text x="10" y="14" textAnchor="middle" fontSize="11" fontWeight="bold" fontFamily="DejaVu Sans" fill="#333">31</text></svg>
);
const Customer = () => (
  <svg width="21" height="17" viewBox="0 0 21 17"><path d="M1 15c0-6 10-7 11-1v1z" fill="#7a3a10" /><circle cx="9" cy="6" r="4.500" fill="#f4b8a8" /><path d="M4 5c0-6 9-6 10-1-3-1-6 0-10 1z" fill="#1c1414" /><path d="M11 8h9v7h-9z" fill="#c89a6c" stroke="#6a4420" /><path d="M13 8v7M18 8v7" stroke="#8a5c34" /><path d="M14 8V6h4v2" fill="none" stroke="#333" /></svg>
);
const Book = () => (
  <svg width="19" height="18" viewBox="0 0 19 18"><path d="M11 2h7v13h-7z" fill="#e4ecf8" stroke="#8a9ab8" /><path d="M3 2l10-2 2 14-11 3z" fill="#8a22c8" stroke="#4a0a78" /><path d="M6 5l5-1v5l-5 1z" fill="#e8c8fa" /><path d="M1 5h3M1 9h3M1 13h3" stroke="#222" /></svg>
);
const GripLines = () => <svg width="14" height="14" viewBox="0 0 14 14"><path d="M0 14L14 0M5 14l9-9M10 14l4-4" stroke="#888" strokeWidth="1.500" /></svg>;
const Tick = () => <svg width="9" height="9" viewBox="0 0 9 9"><path d="M1 4l2 4 5-7" fill="none" stroke="#000" strokeWidth="1.300" /></svg>;

/* ---------- data ---------- */
const topModules = [['setup', 'General Setup'], ['data', 'Master Data Management'], ['procure', 'Procurement Management'], ['warehouse', 'Warehouse Management'], ['production', 'Production Management'], ['mrp', 'Material Requirement (MRP)']];
const bottomModules = [['project', 'Project & Service Management'], ['finance', 'Financial Management'], ['erp', 'Openbravo ERP'], ['info', 'Information']];
const entries: [string, boolean][] = [['Simple Sales Order', false], ['Sales Order', false], ['Update Price List from Orders', true], ['Goods Shipment', false], ['Create Shipments from Orders', true], ['Generate Shipments', true], ['Sales Invoice', false], ['Create Invoices from Orders', true], ['Generate Invoices', true], ['Commission Payment', false], ['Change Order Organization', true]];

/* ---------- form parts ---------- */
type P = { id: string; label: React.ReactNode; link?: boolean; right?: boolean; top?: number };
const Label = ({ id, label, link, right, top }: P) => (
  <LabelCell htmlFor={id} $link={link} $col={right ? 3 : 1} $top={top}>{link && <LinkArrow />}<span>{label}</span></LabelCell>
);
type FP = P & { value?: string; tone?: Tone; w?: number; low?: boolean; icon?: React.ReactNode };
const Text = ({ value = '', tone = 'white', w, low, icon, ...p }: FP) => (
  <><Label {...p} /><FieldCell $col={p.right ? 4 : 2} $w={w} $low={low}>
    <TextInput id={p.id} defaultValue={value} $tone={tone} readOnly={tone === 'gray'} />
    {icon && <Picker type="button" aria-label="Pick a value">{icon}</Picker>}
  </FieldCell></>
);
const Combo = ({ value = '', tone = 'white', w, focus, ...p }: FP & { focus?: boolean }) => (
  <><Label {...p} /><FieldCell $col={p.right ? 4 : 2} $w={w} $top={focus}>
    <SelectInput id={p.id} $tone={tone} $focus={focus}><option>{value}</option></SelectInput>
    <SelectKnob><Tri s={7} /></SelectKnob>
  </FieldCell></>
);

export default function App() {
  return (
    <Window>
      <Global />
      <MenuBar $h={23}>
        {['File', 'Edit', 'View'].map(m => <button key={m}><u>{m[0]}</u>{m.slice(1)}</button>)}
        <button>Hi<u>s</u>tory</button>
        {['Bookmarks', 'Tools', 'Help'].map(m => <button key={m}><u>{m[0]}</u>{m.slice(1)}</button>)}
        <Spacer /><Throbber />
      </MenuBar>
      <NavBar $h={38}>
        <NavButtons>
          <NavButton aria-label="Back"><Arrow fill="#7fd23c" stroke="#3c9410" /></NavButton>
          <NavButton aria-label="Forward"><Arrow fill="#98c488" stroke="#4a8434" flip dashed /></NavButton>
          <NavButton aria-label="Recent pages"><Tri /></NavButton>
          <NavButton aria-label="Reload"><Refresh c="#6d9fdc" e="#2a5796" /></NavButton>
          <NavButton aria-label="Stop"><StopIcon /></NavButton>
          <NavButton aria-label="Home"><Home /></NavButton>
        </NavButtons>
        <UrlBox>
          <SiteBadge><Mark s={18} c="#4ba80c" /></SiteBadge>
          <UrlInput aria-label="Address" />
          <Spacer /><Star />
        </UrlBox>
        <DropButton aria-label="Show history"><Tri /></DropButton>
        <SearchBox>
          <Engine aria-label="Search engine">
            <svg width="16" height="16" viewBox="0 0 16 16"><rect x=".5" y=".5" width="15" height="15" fill="#fff" stroke="#2ca01c" /><path d="M15.500 0v16" stroke="#d22" /><path d="M.5 0v16" stroke="#24c" /><text x="8" y="13.500" textAnchor="middle" fontFamily="DejaVu Sans" fontSize="15" fill="#1437a8">G</text></svg>
            <Tri s={9} />
          </Engine>
          <SearchInput placeholder="Google" aria-label="Search" /><Lens soft />
        </SearchBox>
      </NavBar>
      <BookmarkBar $h={31}>
        <Bookmark href="#"><MostVisited />Most Visited<Tri s={9} /></Bookmark>
        <Bookmark href="#"><Dino />Getting Started</Bookmark>
        <Bookmark href="#"><Rss />Latest Headlines<Tri s={9} /></Bookmark>
      </BookmarkBar>

      <AppArea>
        <Header>
          <LogoPlate $at={59}><CompanyName><b>your</b>COMPANY</CompanyName></LogoPlate>
          <HeaderTools>
            <IconButton aria-label="Go back"><Arrow w={23} fill="#d9efcd" stroke="#3f7a28" /></IconButton>
            <IconButton aria-label="Refresh"><Refresh c="#e3f5d9" e="#3f7a28" /></IconButton>
          </HeaderTools>
          <Crumbs>
            <a href="#">Sales Management</a>||<a href="#">Transactions</a>||<a href="#">Sales Invoice</a>&nbsp;||&nbsp;<a href="#">Header</a>
          </Crumbs>
          <Tools $gap={11}>
            <IconButton aria-label="About"><HelpDot t="i" /></IconButton>
            <IconButton aria-label="Help"><HelpDot t="?" /></IconButton>
          </Tools>
          <LogoPlate $at={15}>
            <Powered>powered by<Brand><span>open</span>bravo</Brand><BrandMark><Mark s={11} c="#44a51c" /></BrandMark></Powered>
          </LogoPlate>
        </Header>
        <Body>
          <Sidebar>
            <UserRow>
              <UserIcon /><Pill $w={88} $bg="#5a5a5a"><b>userA</b></Pill>
              <IconButton aria-label="Log out"><CloseIcon /></IconButton><Spacer />
              <IconButton aria-label="Collapse menu"><MenuToggle /></IconButton>
            </UserRow>
            <UserRow><Warn /><Pill $w={76} $bg="#3e3e3e"><b>0</b>Alerts</Pill></UserRow>
            <Menu>
              {topModules.map(([id, t]) => <Module key={id} href="#"><Art id={id} />{t}</Module>)}
              <Module href="#" $open><Art id="sales" />Sales Management</Module>
              <Leaf href="#"><Folder />Transactions</Leaf>
              {entries.map(([t, process]) => <Leaf key={t} href="#" $deep>{process ? <Gears /> : <WindowDoc />}{t}</Leaf>)}
              <Leaf href="#"><Folder />Analysis Tools</Leaf>
              <Leaf href="#"><Folder />Setup</Leaf>
              {bottomModules.map(([id, t]) => <Module key={id} href="#"><Art id={id} />{t}</Module>)}
            </Menu>
          </Sidebar>
          <Rail>
            <Collapse aria-label="Hide menu"><Chevron /></Collapse>
            <RailTab $gray aria-label="Edit view"><Pencil /></RailTab>
            <RailTab aria-label="Grid view"><GridIcon /></RailTab>
          </Rail>
          <Main>
            <ToolBar>
              <IconButton aria-label="New"><ToolArt id="fresh" /></IconButton><Rule />
              <Tools $gap={4}>
                {['saveGrid', 'saveNew', 'save', 'saveNext'].map(i => <IconButton key={i} aria-label={i}><ToolArt id={i} /></IconButton>)}
              </Tools><Rule />
              <IconButton aria-label="Delete"><ToolArt id="trash" /></IconButton><Rule />
              <Tools $gap={4}>
                {['undo', 'clip', 'print', 'mail'].map(i => <IconButton key={i} aria-label={i}><ToolArt id={i} /></IconButton>)}
                <IconButton aria-label="Search"><Lens s={22} /></IconButton>
                <IconButton aria-label="Audit"><UserClock /></IconButton>
              </Tools><Rule />
              <Tools $gap={4}>
                <IconButton aria-label="First"><Step bar /></IconButton>
                <IconButton aria-label="Previous"><Step /></IconButton>
                <IconButton aria-label="Next"><Step flip /></IconButton>
                <IconButton aria-label="Last"><Step flip bar /></IconButton>
              </Tools><Rule />
              <Spacer />
              <Linked><LinkedPill>Linked Items</LinkedPill><LinkedIcon /></Linked>
            </ToolBar>
            <TabsRow>
              <ActiveTab>Header</ActiveTab>
              <TitleTab>Sales Invoice<i /><Mark s={18} c="#7fab4e" inner={panel} /></TitleTab>
            </TabsRow>
            <Panel>
              <SubTabs>
                {['Lines', 'Discounts', 'Tax', 'Payment', 'Reversed Invoices'].map(t => <a key={t} href="#">{t}</a>)}
              </SubTabs>
              <ScrollFrame>
                <View>
                  <Document>
                    <ErrorBox role="alert">
                      <ErrorSign />
                      <div><h2>Error:</h2><p>Two invoices can not have the same document number in the same organization tree within the same fiscal year</p></div>
                    </ErrorBox>
                    <Form>
                      <Combo id="client" label="Client" link value="SampleClient" tone="gray" />
                      <Combo id="org" label="Organization" link right value="Pamplona" tone="yellow" />
                      <Text id="order" label="Sales Order" link value="50000 - 17-11-2009 - 2.07" tone="gray" low />
                      <Text id="orderDate" label="Order Date" right tone="gray" low />
                      <Text id="docNo" label="Document No." value="I/1" tone="yellow" w={135} />
                      <Text id="orderRef" label="Order Reference" right />
                      <Label id="desc" label="Description" top={7} /><TextArea id="desc" />
                      <Combo id="transDoc" label={<>Transaction<br />Document</>} link value="AR Invoice" focus top={7} />
                      <Text id="invDate" label="Invoice Date" value="17-11-2009" tone="yellow" w={135} icon={<Calendar />} />
                      <Text id="accDate" label="Accounting Date" right value="17-11-2009" tone="yellow" />
                      <Text id="partner" label="Business Partner" link value="CUSTOMER A" tone="yellow" icon={<Customer />} />
                      <Text id="taxDate" label="Tax Date" value="17-11-2009" tone="yellow" w={135} icon={<Calendar />} />
                      <Combo id="address" label="Partner Address" link right value="Pamplona, Street" tone="yellow" />
                      <Combo id="contact" label="User/Contact" link value="Alfred" />
                      <Combo id="priceList" label="Price List" link value="CUSTOMER A" tone="yellow" />
                      <Combo id="currency" label="Currency" link right value="EUR" tone="gray" />
                      <Combo id="rep" label="Sales Representative" link value="Sales A" />
                      <Label id="discount" label="Print Discount" right />
                      <FieldCell $col={4}><Check id="discount" type="checkbox" defaultChecked /><CheckMark><Tick /></CheckMark></FieldCell>
                      <Combo id="payForm" label="Form of Payment" value="Money Order" tone="yellow" w={135} />
                      <Combo id="terms" label="Payment Terms" link right value="30 days, 5" tone="yellow" />
                      <Group><span>Reference</span><hr /></Group>
                    </Form>
                    <ProjectRow as="div">
                      <Text id="project" label="Project" link icon={<Book />} />
                    </ProjectRow>
                  </Document>
                </View>
                <Track $v>
                  <TrackButton aria-label="Scroll up"><Tri d="up" s={7} c="#777" /></TrackButton>
                  <Thumb $share={73} /><Rest $share={27} />
                  <TrackButton aria-label="Scroll down"><Tri s={7} /></TrackButton>
                </Track>
                <Track>
                  <TrackButton aria-label="Scroll left"><Tri d="left" s={7} c="#777" /></TrackButton>
                  <Thumb $share={75} /><Rest $share={25} />
                  <TrackButton aria-label="Scroll right"><Tri d="right" s={7} /></TrackButton>
                </Track>
                <Corner />
              </ScrollFrame>
            </Panel>
          </Main>
        </Body>
      </AppArea>
      <StatusBar><StatusText>Done</StatusText><Spacer /><Grip><GripLines /></Grip></StatusBar>
    </Window>
  );
}
